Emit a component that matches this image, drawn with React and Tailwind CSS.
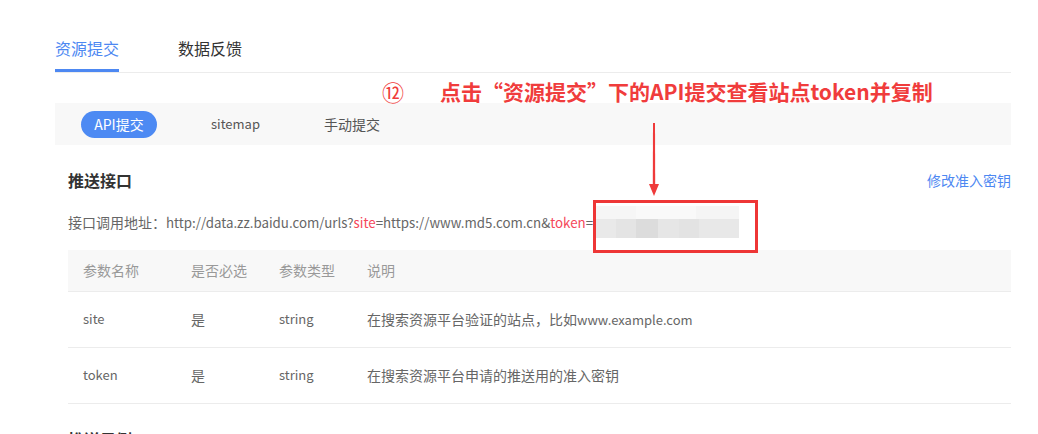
import React from 'react';

const font = { fontFamily: '"Noto Sans CJK SC", "Noto Sans", sans-serif' };

const rows = [
  { name: 'site', must: '是', type: 'string', desc: '在搜索资源平台验证的站点，比如', tail: 'www.example.com' },
  { name: 'token', must: '是', type: 'string', desc: '在搜索资源平台申请的推送用的准入密钥', tail: '' },
];

// blurred (mosaic) token value
const Mosaic = () => (
  <span className="inline-flex flex-col align-middle ml-[3px] -mt-[4px]">
    <span className="flex h-[13px]">
      <span className="w-[40px] bg-[#f6f6f6]" />
      <span className="w-[60px] bg-[#f9f9f9]" />
      <span className="w-[43px] bg-[#f5f5f5]" />
    </span>
    <span className="flex h-[19px]">
      <span className="w-[20px] bg-[#e9e9e9]" />
      <span className="w-[20px] bg-[#e4e4e4]" />
      <span className="w-[22px] bg-[#dcdcdc]" />
      <span className="w-[21px] bg-[#e6e6e6]" />
      <span className="w-[20px] bg-[#e3e3e3]" />
      <span className="w-[40px] bg-[#e8e8e8]" />
    </span>
  </span>
);

export default function App() {
  return (
    <div className="relative w-[1038px] h-[434px] overflow-hidden bg-white" style={font}>
      <div className="ml-[55px] w-[956px]">
        {/* top tabs */}
        <div className="flex gap-[59px] pt-[36px] border-b border-[#ececec]">
          <div className="text-[16px] leading-[24px] text-[#4d88f2] pb-[9px] border-b-[3px] border-[#4d88f2]">资源提交</div>
          <div className="text-[16px] leading-[24px] text-[#333] pb-[9px]">数据反馈</div>
        </div>

        {/* sub tabs */}
        <div className="mt-[30px] h-[42px] bg-[#f8f8f8] flex items-center pl-[26px] text-[14px] text-[#555]">
          <span className="w-[76px] h-[27px] rounded-full bg-[#4d8af3] text-white flex items-center justify-center">API提交</span>
          <span className="ml-[54px] text-[13px]">sitemap</span>
          <span className="ml-[64px]">手动提交</span>
        </div>

        <div className="pl-[13px]">
          <div className="mt-[23px] flex items-center justify-between">
            <h2 className="text-[16px] leading-[24px] font-bold text-[#333]">推送接口</h2>
            <a className="text-[14px] text-[#4d88f2] cursor-pointer">修改准入密钥</a>
          </div>

          <p className="mt-[18px] text-[13.3px] leading-[22px] text-[#666]">
            <span className="text-[14px]">接口调用地址：</span>http://data.zz.baidu.com/urls?<span className="text-[#f5475a]">site</span>=https://www.md5.com.cn&amp;<span className="text-[#f5475a]">token</span>=<Mosaic />
          </p>

          {/* params table */}
          <table className="mt-[12px] w-full text-[14px] text-left border-collapse">
            <thead>
              <tr className="bg-[#f8f8f8] text-[#999] h-[41px] border-b border-[#ececec]">
                <th className="font-normal pl-[15px] w-[123px]">参数名称</th>
                <th className="font-normal w-[88px]">是否必选</th>
                <th className="font-normal w-[88px]">参数类型</th>
                <th className="font-normal">说明</th>
              </tr>
            </thead>
            <tbody className="text-[#666]">
              {rows.map((r) => (
                <tr key={r.name} className="h-[56px] border-b border-[#ececec]">
                  <td className="pl-[15px] text-[13px]">{r.name}</td>
                  <td>{r.must}</td>
                  <td className="text-[13px]">{r.type}</td>
                  <td>
                    {r.desc}
                    {r.tail && <span className="text-[13px]">{r.tail}</span>}
                  </td>
                </tr>
              ))}
            </tbody>
          </table>

          <h2 className="mt-[23px] text-[16px] leading-[24px] font-bold text-[#333]">推送示例</h2>
        </div>
      </div>

      {/* annotation overlay */}
      <div className="absolute left-[382px] top-[77px] flex items-center text-[#f03c3c] font-bold">
        <span className="text-[22px] leading-[28px] font-normal">⑫</span>
        <span className="ml-[36px] text-[21px] leading-[28px]">点击“资源提交”下的API提交查看站点token并复制</span>
      </div>
      <svg className="absolute left-[647px] top-[122px]" width="14" height="76" viewBox="0 0 14 76">
        <path d="M6 1 L8 1 L8.2 62 L5.8 62 Z" fill="#ef3a3a" />
        <path d="M2 62 L12 62 L7 74 Z" fill="#ef3a3a" />
      </svg>
      <div className="absolute left-[593px] top-[200px] w-[165px] h-[53px] border-[3px] border-[#ee3636]" />
    </div>
  );
}
